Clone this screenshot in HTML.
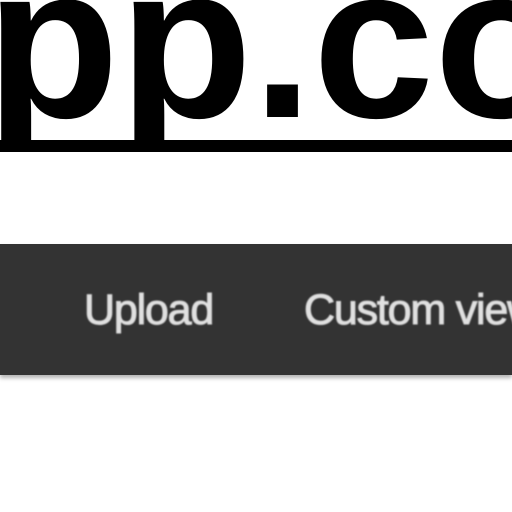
<!DOCTYPE html>
<html><head><style>
html,body{margin:0;padding:0;width:512px;height:512px;overflow:hidden;background:#fff}
.bar{position:absolute;left:0;top:244px;width:512px;height:131px;background:#333;box-shadow:0 3px 4px rgba(0,0,0,.3)}
.t{position:absolute;top:0;font-family:"Liberation Sans",sans-serif;font-size:43px;color:#e0e0e0;white-space:nowrap;letter-spacing:-1.2px;filter:blur(0.9px);line-height:1;-webkit-text-stroke:1px #e0e0e0}
</style></head><body>
<svg width="512" height="160" style="position:absolute;left:0;top:0">
<defs><clipPath id="c"><rect x="0" y="0" width="512" height="152"/></clipPath></defs>
<g clip-path="url(#c)">
<text x="-14" y="117" font-family="Liberation Sans, sans-serif" font-weight="bold" font-size="218" fill="#000">pp.com</text>
</g>
<rect x="0" y="140" width="512" height="12" fill="#000"/>
</svg>
<div class="bar">
<div class="t" style="left:84px;top:45px">Upload</div>
<div class="t" style="left:304px;top:45px">Custom view</div>
</div>
</body></html>
